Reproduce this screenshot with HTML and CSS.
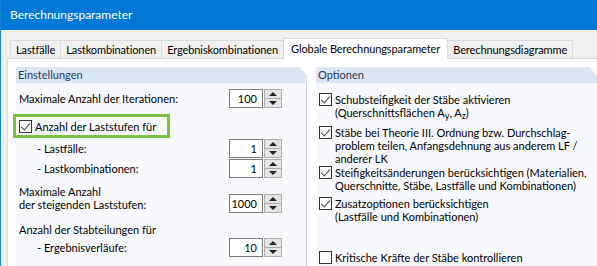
FILE: index.html
```html
<!DOCTYPE html>
<html lang="de">
<head>
  <meta charset="UTF-8">
  <title>Berechnungsparameter</title>
  <link rel="stylesheet" href="styles.css">
</head>
<body>
  <div class="window">
    <div class="titlebar">Berechnungsparameter</div>

    <div class="dialog">
      <!-- Tabs -->
      <div class="tabs">
        <div class="tab">Lastfälle</div>
        <div class="tab">Lastkombinationen</div>
        <div class="tab">Ergebniskombinationen</div>
        <div class="tab active">Globale Berechnungsparameter</div>
        <div class="tab">Berechnungsdiagramme</div>
      </div>

      <div class="tab-panel">
        <!-- Einstellungen -->
        <div class="group settings">
          <div class="group-head">Einstellungen</div>
          <div class="group-body">
            <div class="row row-iter">
              <span>Maximale Anzahl der Iterationen:</span>
              <div class="spin"><div class="spin-value">100</div><div class="spin-btns"><span class="up"></span><span class="down"></span></div></div>
            </div>

            <div class="highlight">
              <span class="check checked"></span>
              <span>Anzahl der Laststufen für</span>
            </div>

            <div class="row sub">
              <span>- Lastfälle:</span>
              <div class="spin"><div class="spin-value">1</div><div class="spin-btns"><span class="up"></span><span class="down"></span></div></div>
            </div>
            <div class="row sub">
              <span>- Lastkombinationen:</span>
              <div class="spin"><div class="spin-value">1</div><div class="spin-btns"><span class="up"></span><span class="down"></span></div></div>
            </div>

            <div class="row row-max">
              <span>Maximale Anzahl<br>der steigenden Laststufen:</span>
              <div class="spin"><div class="spin-value">1000</div><div class="spin-btns"><span class="up"></span><span class="down"></span></div></div>
            </div>

            <div class="label-line">Anzahl der Stabteilungen für</div>

            <div class="row sub">
              <span>- Ergebnisverläufe:</span>
              <div class="spin"><div class="spin-value">10</div><div class="spin-btns"><span class="up"></span><span class="down"></span></div></div>
            </div>
          </div>
        </div>

        <!-- Optionen -->
        <div class="group options">
          <div class="group-head">Optionen</div>
          <div class="group-body">
            <div class="option opt-1">
              <span class="check checked"></span>
              <span>Schubsteifigkeit der Stäbe aktivieren<br>(Querschnittsflächen A<sub>y</sub>, A<sub>z</sub>)</span>
            </div>
            <div class="option opt-2">
              <span class="check checked"></span>
              <span>Stäbe bei Theorie III. Ordnung bzw. Durchschlag-<br>problem teilen, Anfangsdehnung aus anderem LF /<br>anderer LK</span>
            </div>
            <div class="option opt-3">
              <span class="check checked"></span>
              <span>Steifigkeitsänderungen berücksichtigen (Materialien,<br>Querschnitte, Stäbe, Lastfälle und Kombinationen)</span>
            </div>
            <div class="option opt-4">
              <span class="check checked"></span>
              <span>Zusatzoptionen berücksichtigen<br>(Lastfälle und Kombinationen)</span>
            </div>
            <div class="option opt-5">
              <span class="check"></span>
              <span>Kritische Kräfte der Stäbe kontrollieren</span>
            </div>
          </div>
        </div>
      </div>
    </div>
  </div>
</body>
</html>
```

FILE: styles.css
```css
body {
  margin: 0;
  font-family: Lato, "Noto Sans", sans-serif;
  font-size: 11px;
  color: #000;
  background: #f0f0f0;
  overflow: hidden;
}
.window {
  width: 597px;
  height: 266px;
  border-left: 1px solid #1883d7;
  box-sizing: border-box;
  background: #f0f0f0;
  overflow: hidden;
}
.titlebar {
  height: 30px;
  background: #0078d7;
  color: #fff;
  font-size: 12px;
  line-height: 30px;
  padding-left: 9px;
}
.dialog {
  padding: 7px 0 0 6px;
}

/* Tabs */
.tabs {
  display: flex;
  align-items: flex-end;
  height: 21px;
  padding-left: 3px;
}
.tab {
  height: 18px;
  line-height: 18px;
  padding: 0 5px;
  border: 1px solid #d9d9d9;
  border-bottom: none;
  border-right: none;
  background: #f0f0f0;
  box-sizing: border-box;
  white-space: nowrap;
  letter-spacing: -0.1px;
}
.tab.active {
  height: 21px;
  line-height: 19px;
  background: #fff;
  border-right: 1px solid #d9d9d9;
  padding: 0 7px;
  margin-bottom: -1px;
  position: relative;
  z-index: 1;
}
.tab.active + .tab {
  border-left: none;
}
.tab:last-child {
  border-right: 1px solid #d9d9d9;
}
.tab-panel {
  display: flex;
  gap: 9px;
  height: 220px;
  background: #fff;
  border: 1px solid #d9d9d9;
  border-right: none;
  padding: 8px 0 0 8px;
  box-sizing: border-box;
}

/* Groups */
.group {
  display: flex;
  flex-direction: column;
}
.settings {
  width: 291px;
  flex: none;
}
.options {
  flex: 1;
  min-width: 0;
}
.group-head {
  height: 16px;
  line-height: 16px;
  padding-left: 2px;
  background: #dce6f4;
  color: #1e3a5f;
  clip-path: polygon(0 0, calc(100% - 8px) 0, 100% 8px, 100% 100%, 0 100%);
}
.group-body {
  flex: 1;
  background: #f7f9fd;
}
.settings .group-body {
  border-right: 1px solid #c9cde8;
  padding: 6px 24px 0 3px;
}
.options .group-body {
  padding: 10px 0 0 3px;
}

/* Rows with spinners */
.row {
  display: flex;
  align-items: center;
  justify-content: space-between;
  height: 19px;
}
.row.sub {
  padding-left: 18px;
  margin-top: 1px;
}
.row-max {
  height: 27px;
  align-items: flex-end;
  margin-top: 8px;
  line-height: 13px;
}
.row-max > span {
  padding-bottom: 2px;
}
.label-line {
  margin-top: 10px;
  height: 14px;
  line-height: 14px;
}
.spin {
  display: flex;
  height: 19px;
}
.spin-value {
  width: 34px;
  box-sizing: border-box;
  border: 1px solid #7a7a7a;
  background: #fff;
  text-align: right;
  padding-right: 5px;
  line-height: 17px;
}
.spin-btns {
  display: flex;
  flex-direction: column;
  width: 18px;
  margin-left: 1px;
  border: 1px solid #adadad;
  box-sizing: border-box;
  background: #e5e5e5;
}
.spin-btns span {
  flex: 1;
  display: flex;
  align-items: center;
  justify-content: center;
}
.spin-btns .up {
  border-bottom: 1px solid #adadad;
}
.spin-btns .up::before {
  content: "";
  border-left: 4px solid transparent;
  border-right: 4px solid transparent;
  border-bottom: 4px solid #222;
}
.spin-btns .down::before {
  content: "";
  border-left: 4px solid transparent;
  border-right: 4px solid transparent;
  border-top: 4px solid #222;
}

/* Checkboxes */
.check {
  flex: none;
  width: 13px;
  height: 13px;
  box-sizing: border-box;
  border: 1px solid #333;
  background: #fff;
  position: relative;
  margin-right: 3px;
}
.check.checked::after {
  content: "";
  position: absolute;
  left: 3px;
  top: 0;
  width: 4px;
  height: 8px;
  border-right: 1px solid #444;
  border-bottom: 1px solid #444;
  transform: rotate(40deg);
}
.highlight {
  display: flex;
  align-items: center;
  width: 157px;
  height: 24px;
  margin: 6px 0 1px -6px;
  padding-left: 3px;
  border: 3px solid #7dc243;
  box-sizing: border-box;
}
.option {
  display: flex;
  align-items: flex-start;
  line-height: 13px;
  white-space: nowrap;
}
.option sub {
  font-size: 9px;
  vertical-align: -2px;
  line-height: 0;
}
.opt-2 { margin-top: 7px; }
.opt-3 { margin-top: 1px; }
.opt-4 { margin-top: 5px; }
.opt-5 { margin-top: 28px; }
```
